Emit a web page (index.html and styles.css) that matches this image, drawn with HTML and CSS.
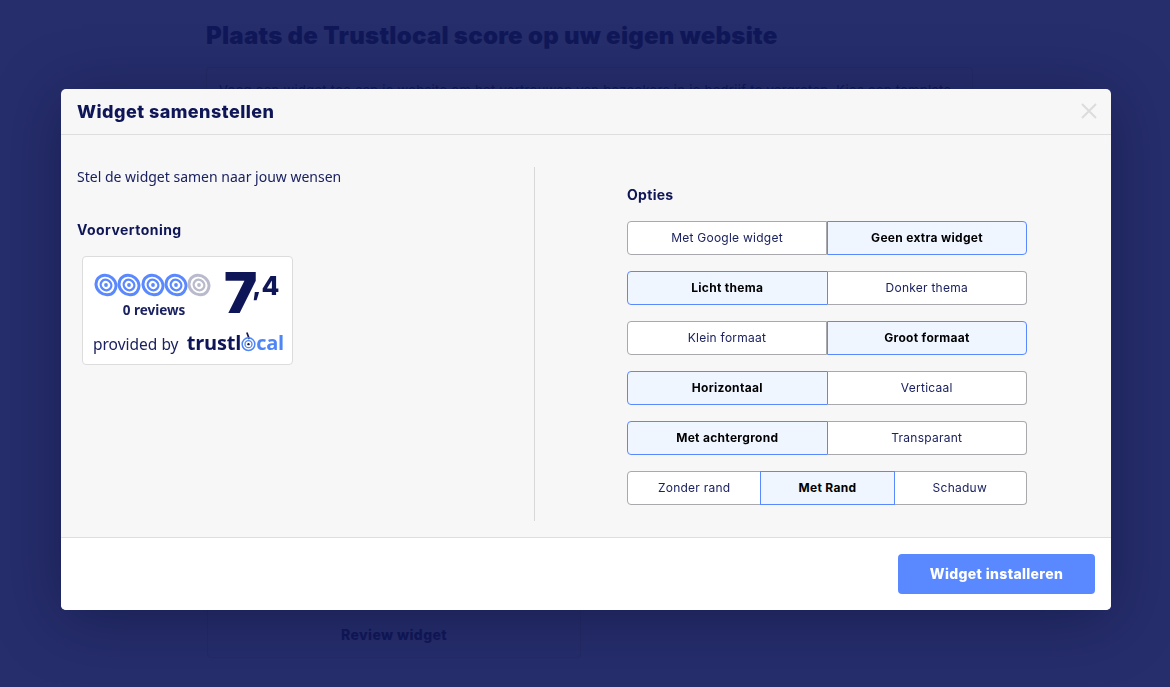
FILE: index.html
```html
<!DOCTYPE html>
<html lang="nl">
<head>
<meta charset="utf-8">
<title>Widget samenstellen</title>
<link rel="stylesheet" href="styles.css">
</head>
<body>
<svg class="defs" width="0" height="0" aria-hidden="true">
  <symbol id="target" viewBox="0 0 24 24">
    <g fill="none" stroke="currentColor" transform="rotate(40 12 12)">
      <ellipse cx="12" cy="12" rx="10.4" ry="9.4" stroke-width="3"/>
      <ellipse cx="12" cy="12" rx="5.5" ry="5" stroke-width="2.4"/>
    </g>
    <circle cx="12" cy="12" r="1.9" fill="currentColor"/>
  </symbol>
</svg>
<main class="page">
  <h1 class="page-title">Plaats de Trustlocal score op uw eigen website</h1>
  <section class="intro">Voeg een widget toe aan je website om het vertrouwen van bezoekers in je bedrijf te vergroten. Kies een template</section>
  <section class="template"><span>Review widget</span></section>
</main>
<div class="overlay">
  <div class="modal">
    <header class="modal-head">
      <h2>Widget samenstellen</h2>
      <svg class="close" viewBox="0 0 16 16" width="16" height="16" aria-label="Sluiten"><path d="M1 1 15 15M15 1 1 15" fill="none" stroke="#dcdcdc" stroke-width="2"/></svg>
    </header>
    <div class="modal-body">
      <div class="col-left">
        <p class="lead">Stel de widget samen naar jouw wensen</p>
        <h3 class="sub preview-title">Voorvertoning</h3>
        <div class="widget">
          <div class="widget-top">
            <div class="score-left">
              <div class="targets">
                <svg class="t on"><use href="#target"/></svg>
                <svg class="t on"><use href="#target"/></svg>
                <svg class="t on"><use href="#target"/></svg>
                <svg class="t on"><use href="#target"/></svg>
                <svg class="t off"><use href="#target"/></svg>
              </div>
              <div class="count">0 reviews</div>
            </div>
            <div class="score"><span class="big">7</span><span class="small">,4</span></div>
          </div>
          <div class="widget-bottom">
            <span class="by">provided by</span>
            <span class="logo">trustl<svg class="logo-o" viewBox="0 0 18 24" width="15" height="21"><path d="M7 0 10 8" stroke="#0f1657" stroke-width="2" fill="none"/><circle cx="9" cy="14" r="7.6" fill="none" stroke="#4f86f7" stroke-width="1.8"/><circle cx="9" cy="14" r="4.2" fill="none" stroke="#4f86f7" stroke-width="1.6"/><circle cx="9" cy="14" r="1.4" fill="#0f1657"/></svg><span class="logo-blue">cal</span></span>
          </div>
        </div>
      </div>
      <div class="col-right">
        <h3 class="sub opties">Opties</h3>
        <div class="options">
          <div class="seg"><button>Met Google widget</button><button class="sel">Geen extra widget</button></div>
          <div class="seg"><button class="sel">Licht thema</button><button>Donker thema</button></div>
          <div class="seg"><button>Klein formaat</button><button class="sel">Groot formaat</button></div>
          <div class="seg"><button class="sel">Horizontaal</button><button>Verticaal</button></div>
          <div class="seg"><button class="sel">Met achtergrond</button><button>Transparant</button></div>
          <div class="seg"><button>Zonder rand</button><button class="sel">Met Rand</button><button>Schaduw</button></div>
        </div>
      </div>
    </div>
    <footer class="modal-foot"><button class="install">Widget installeren</button></footer>
  </div>
</div>
</body>
</html>
```
FILE: styles.css
```css
* { box-sizing: border-box; }
html, body { margin: 0; height: 100%; }
body {
  background: #262e6c;
  color: #0f1657;
  font-family: Inter, "Liberation Sans", sans-serif;
  overflow: hidden;
}
.defs { position: absolute; }
.page { padding: 20px 0 0 206px; width: 973px; }
.page-title { margin: 0; font-size: 24px; line-height: 31px; font-weight: 900; color: #111859; letter-spacing: 0.25px; }
.intro {
  margin-top: 16px; height: 480px; padding: 13px 12px;
  border: 1px solid #242b65; border-radius: 4px;
  font-size: 13px; line-height: 18px; color: #111859; white-space: nowrap; overflow: hidden; letter-spacing: 0.3px;
}
.template {
  width: 374px; height: 111px; padding-top: 78px; margin-left: 1px;
  border: 1px solid #242b65; border-radius: 4px; text-align: center;
  font-size: 14px; line-height: 17px; font-weight: 800; color: #111859; letter-spacing: 0.4px;
}
.overlay { position: fixed; inset: 0; }
.modal {
  position: absolute; left: 61px; top: 89px; width: 1050px; height: 521px;
  background: #f7f7f7; border-radius: 5px; overflow: hidden;
  display: flex; flex-direction: column;
}
.overlay::before {
  content: ""; position: absolute; left: 61px; top: 89px; width: 1050px; height: 521px;
  box-shadow: 0 8px 60px rgba(10, 14, 50, 0.45);
}
.modal-head {
  height: 46px; flex: none; display: flex; align-items: center; justify-content: space-between;
  padding: 0 14px 2px 16px; border-bottom: 1px solid #dedede;
}
.modal-head h2 { margin: 2px 0 0; font-size: 18px; font-weight: 800; letter-spacing: 0.45px; }
.modal-body { flex: 1; display: flex; padding: 32px 0 16px 16px; }
.col-left { width: 458px; flex: none; border-right: 1px solid #d8d8d8; }
.lead { margin: 1px 0 0; font: 400 14px/17px "Noto Sans", sans-serif; color: #1b2260; }
.sub { margin: 0; font-size: 14px; line-height: 20px; font-weight: 700; }
.opties { letter-spacing: 0.3px; }
.preview-title { margin-top: 35px; letter-spacing: 0.45px; }
.widget {
  margin: 16px 0 0 5px; width: 211px; height: 109px; background: #fff;
  border: 1px solid #dcdcdc; border-radius: 4px; padding: 16px 8px 0 10px;
}
.widget-top { display: flex; height: 53px; }
.score-left { width: 121px; flex: none; }
.targets { display: flex; margin-left: 1px; }
.t { width: 24px; height: 24px; flex: none; margin-right: -0.7px; }
.on { color: #5a88ff; }
.off { color: #b9bbcd; }
.count { margin-top: 5px; text-align: center; width: 122px; font: 700 13.5px/16px "Noto Sans", sans-serif; color: #1b2260; }
.score { display: flex; align-items: flex-start; margin-top: -8px; margin-left: 10px; color: #0f1657; }
.big { font-size: 56px; line-height: 56px; font-weight: 900; letter-spacing: -5px; }
.small { font-size: 26px; line-height: 32px; font-weight: 800; margin-top: 5px; }
.widget-bottom { display: flex; align-items: center; justify-content: space-between; margin-top: 6px; }
.by { font: 400 15.5px/20px "Noto Sans", sans-serif; color: #1b2260; margin: 1px 6px 0 0; white-space: nowrap; }
.logo { display: inline-flex; align-items: flex-end; font: 700 20px/22px "Open Sans", sans-serif; color: #0f1657; letter-spacing: -0.2px; white-space: nowrap; }
.logo-o { flex: none; margin: 0 0 1px 0; }
.logo-blue { color: #4f86f7; }
.col-right { flex: none; width: 400px; margin-left: 92px; padding-top: 18px; }
.options { margin-top: 16px; display: flex; flex-direction: column; gap: 16px; }
.seg { display: flex; height: 34px; }
.seg button {
  flex: 1 1 0; min-width: 0; padding: 0; height: 34px; background: #fff;
  border: 1px solid #a9a9ad; border-left-width: 0; font: 400 12px/16px Inter, sans-serif; color: #1b2260; letter-spacing: 0.25px;
}
.seg button:first-child { border-left-width: 1px; border-radius: 4px 0 0 4px; }
.seg button:last-child { border-radius: 0 4px 4px 0; }
.seg button.sel { background: #eff6ff; border: 1px solid #5a88ff; font-weight: 700; color: #000; letter-spacing: 0.3px; }
.seg button.sel:nth-child(2):not(:last-child) { margin: 0 -1px; position: relative; }
.modal-foot {
  height: 73px; flex: none; background: #fff; border-top: 1px solid #dedede;
  display: flex; justify-content: flex-end; align-items: flex-start; padding: 16px 16px 0 0;
}
.install {
  width: 197px; height: 40px; background: #5a88ff; color: #fff; border: 0; border-radius: 4px;
  font: 800 14px/20px Inter, sans-serif; letter-spacing: 0.35px;
}
```
